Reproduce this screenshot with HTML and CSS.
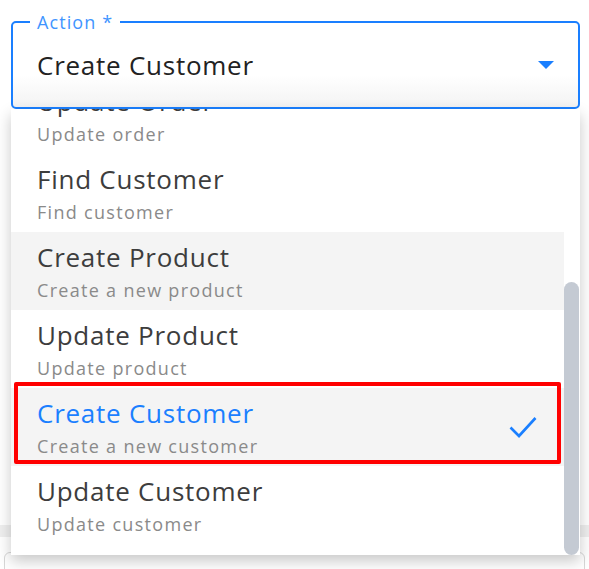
FILE: index.html
```html
<!DOCTYPE html>
<html>
<head>
<meta charset="utf-8">
<link rel="stylesheet" href="styles.css">
</head>
<body>
<div class="page">
  <div class="field">
    <span class="label">Action *</span>
    <div class="value">Create Customer</div>
    <svg class="arrow" width="16" height="8" viewBox="0 0 16 8"><path d="M0 0h16L8 8z" fill="#1a7fff"/></svg>
    <div class="menu">
      <div class="list">
        <div class="row"><div class="text"><div class="title">Update Order</div><div class="sub">Update order</div></div></div>
        <div class="row"><div class="text"><div class="title">Find Customer</div><div class="sub">Find customer</div></div></div>
        <div class="row hover"><div class="text"><div class="title">Create Product</div><div class="sub">Create a new product</div></div></div>
        <div class="row"><div class="text"><div class="title">Update Product</div><div class="sub">Update product</div></div></div>
        <div class="row selected"><div class="text"><div class="title">Create Customer</div><div class="sub">Create a new customer</div></div>
          <svg class="check" width="28" height="22" viewBox="0 0 28 22"><path d="M1.5 11.5L10 20L26.5 2" fill="none" stroke="#1a7fff" stroke-width="2.6"/></svg>
          <div class="mark"></div>
        </div>
        <div class="row"><div class="text"><div class="title">Update Customer</div><div class="sub">Update customer</div></div></div>
      </div>
      <div class="track"><div class="thumb"></div></div>
    </div>
  </div>
  <div class="band"></div>
  <div class="nextbox"></div>
</div>
</body>
</html>
```
FILE: styles.css
```css
* { box-sizing: border-box; }
html, body { margin: 0; padding: 0; background: #fff; }
body { font-family: "Open Sans", "Noto Sans", sans-serif; overflow: hidden; }
.page { width: 589px; height: 569px; padding-top: 21px; }
.field {
  position: relative;
  margin: 0 9px 0 11px;
  height: 88px;
  border: 2px solid #1a7fff;
  border-radius: 5px;
  background: linear-gradient(#fff 62%, #f3f3f3);
  display: flex;
  align-items: center;
  justify-content: space-between;
  padding: 0 24px;
  z-index: 2;
}
.label {
  position: absolute;
  top: -12px;
  left: 17px;
  padding: 0 7px;
  background: #fff;
  color: #3f95ff;
  font-size: 18px;
  line-height: 22px;
  letter-spacing: 1.1px;
}
.value { font-size: 26px; color: #222; line-height: 34px; letter-spacing: 0.75px; }
.menu {
  position: absolute;
  top: calc(100% + 2px);
  left: -2px;
  right: -2px;
  height: 446px;
  background: #fff;
  box-shadow: 0 6px 14px rgba(0,0,0,0.22);
  overflow: hidden;
  display: flex;
  z-index: -1;
}
.list { flex: 1; margin-top: -33px; }
.row {
  position: relative;
  height: 78px;
  padding: 8px 27px 0 26px;
  display: flex;
  justify-content: space-between;
  align-items: flex-start;
}
.row.hover, .row.selected { background: #f4f4f4; }
.title { font-size: 26px; line-height: 34px; color: #3d3d3d; letter-spacing: 0.75px; }
.sub { font-size: 18px; line-height: 24px; color: #8a8a8a; margin-top: 4px; letter-spacing: 1.3px; }
.selected .title { color: #1a7fff; }
.check { align-self: center; margin-top: -8px; }
.mark {
  position: absolute;
  top: -6px; left: 3px; right: 3px; bottom: 2px;
  border: 4px solid #ff0000;
  border-radius: 2px;
}
.track { width: 16px; }
.thumb {
  margin-top: 173px;
  width: 15px;
  height: 273px;
  border-radius: 8px;
  background: #c4cad3;
}
.band { margin-top: 416px; height: 12px; background: #efefef; }
.nextbox {
  margin: 15px 4px 0 4px;
  height: 40px;
  border: 1px solid #d8d8d8;
  border-radius: 6px;
}
```
